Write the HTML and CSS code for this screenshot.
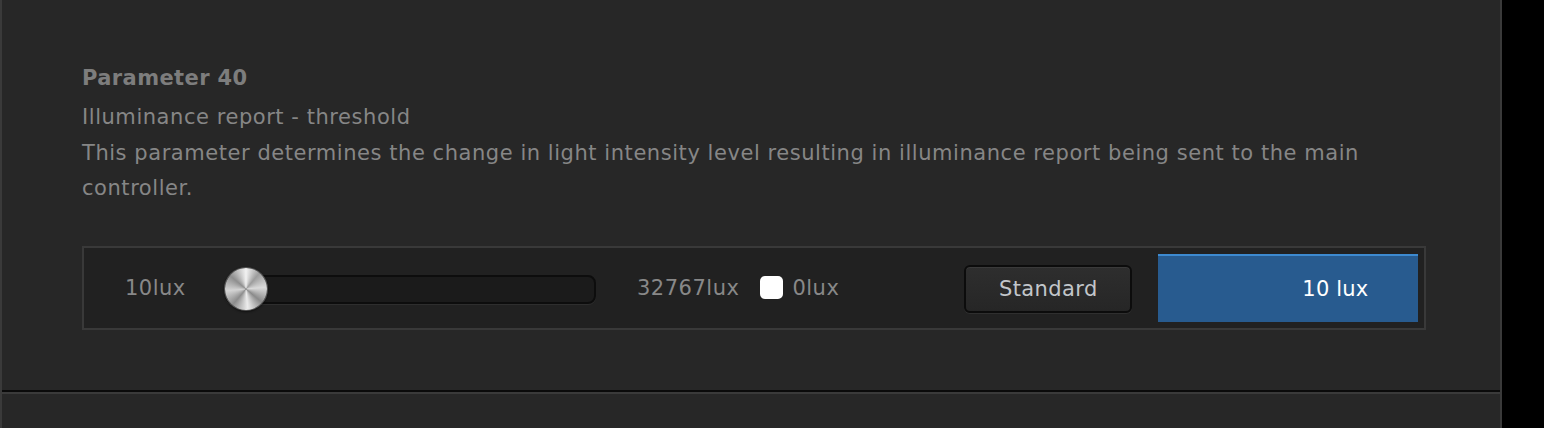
FILE: index.html
```html
<!DOCTYPE html>
<html>
<head>
<meta charset="utf-8">
<link rel="stylesheet" href="styles.css">
</head>
<body>
<div class="page">
  <section class="param">
    <div class="title">Parameter 40</div>
    <div class="subtitle">Illuminance report - threshold</div>
    <div class="desc">This parameter determines the change in light intensity level resulting in illuminance report being sent to the main controller.</div>
    <div class="control">
      <span class="min">10lux</span>
      <div class="track"><span class="knob"></span></div>
      <span class="max">32767lux</span>
      <span class="check"></span>
      <span class="zero">0lux</span>
      <button class="std">Standard</button>
      <div class="value">10 lux</div>
    </div>
  </section>
  <div class="next"></div>
</div>
</body>
</html>
```
FILE: styles.css
```css
html, body {
  margin: 0;
  padding: 0;
  background: #000;
  height: 428px;
  overflow: hidden;
}
.page {
  width: 1498px;
  height: 428px;
  background: #272727;
  border-left: 2px solid #3a3a3a;
  border-right: 2px solid #3a3a3a;
  font-family: "DejaVu Sans", Verdana, sans-serif;
  color: #858585;
}
.param {
  height: 330px;
  padding: 60px 0 0 80px;
  border-bottom: 2px solid #0a0a0a;
}
.title {
  font-weight: bold;
  font-size: 21px;
  letter-spacing: 0.4px;
  line-height: 36px;
  margin-bottom: 4px;
  color: #7d7d7d;
}
.subtitle, .desc {
  font-size: 21px;
  letter-spacing: 0.55px;
  line-height: 35.5px;
  color: #868686;
  width: 1290px;
}
.control {
  margin-top: 39px;
  width: 1340px;
  height: 80px;
  border: 2px solid #393939;
  background: #212121;
  display: flex;
  align-items: center;
  font-size: 21px;
  letter-spacing: 0.5px;
  color: #888;
}
.min {
  margin-left: 41px;
  width: 100px;
}
.track {
  position: relative;
  width: 367px;
  height: 25px;
  margin-top: 3px;
  border: 2px solid #0d0d0d;
  border-radius: 8px;
  background: #1b1b1b;
  box-shadow: 0 1px 0 #2e2e2e;
}
.knob {
  position: absolute;
  left: -2px;
  top: -9px;
  width: 42px;
  height: 42px;
  border-radius: 50%;
  background: conic-gradient(from 0deg, #f2f2f2 0deg, #9c9c9c 40deg, #dadada 85deg, #8a8a8a 130deg, #ececec 175deg, #8c8c8c 220deg, #d4d4d4 265deg, #8e8e8e 310deg, #f2f2f2 360deg);
  box-shadow: 0 0 0 1px #555, 0 1px 3px #000;
}
.max {
  margin-left: 41px;
}
.check {
  margin-left: 21px;
  width: 23px;
  height: 23px;
  border-radius: 5px;
  background: #fff;
}
.zero {
  margin-left: 9px;
}
.std {
  margin-left: 125px;
  width: 168px;
  height: 48px;
  margin-top: 2px;
  border: 2px solid #0c0c0c;
  border-radius: 6px;
  background: linear-gradient(#2e2e2e, #262626);
  box-shadow: inset 0 1px 0 #3a3a3a, 0 1px 0 #2f2f2f;
  color: #c2c6ca;
  font-family: "DejaVu Sans", Verdana, sans-serif;
  font-size: 21px;
  letter-spacing: 0.4px;
  padding: 0;
}
.value {
  margin-left: 26px;
  width: 260px;
  height: 68px;
  box-sizing: border-box;
  border-top: 2px solid #3d8ad0;
  background: #285b8f;
  color: #fff;
  font-size: 21px;
  letter-spacing: 0.2px;
  display: flex;
  align-items: center;
  padding-left: 144px;
}
.next {
  height: 34px;
  border-top: 2px solid #3a3a3a;
}
```
